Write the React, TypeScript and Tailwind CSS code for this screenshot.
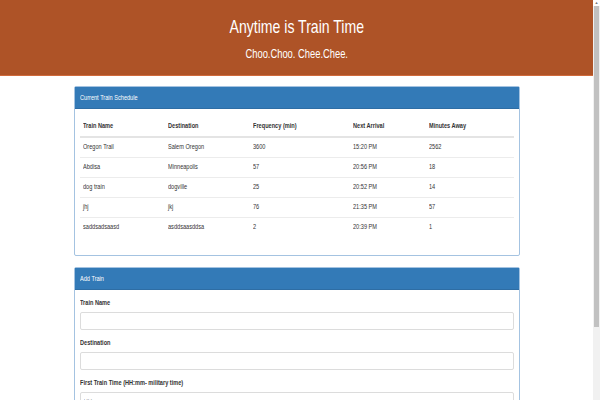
import React from 'react';

const trains = [
    { name: 'Oregon Trail', dest: 'Salem Oregon', freq: '3600', next: '15:20 PM', away: '2562' },
    { name: 'Abdisa', dest: 'Minneapolis', freq: '57', next: '20:56 PM', away: '18' },
    { name: 'dog train', dest: 'dogville', freq: '25', next: '20:52 PM', away: '14' },
    { name: 'jhj', dest: 'jkj', freq: '76', next: '21:35 PM', away: '57' },
    { name: 'saddsadsaasd', dest: 'asddsaasddsa', freq: '2', next: '20:39 PM', away: '1' },
];

// the page text is narrow, squeeze it a bit horizontally
const Sq: React.FC<{ children: React.ReactNode }> = ({ children }) => (
    <span className="inline-block origin-left scale-x-[0.8] whitespace-nowrap">{children}</span>
);

const Panel: React.FC<{ title: string; children: React.ReactNode }> = ({ title, children }) => (
    <div className="border border-[#a4c3e1] rounded-[2px] bg-white">
        <div className="h-[22px] bg-[#337ab7] text-white text-[7px] leading-[22px] px-[5px] border-b border-[#2e6da4]">
            <Sq>{title}</Sq>
        </div>
        {children}
    </div>
);

export default function App() {
    return (
        <div className="flex h-[400px] overflow-hidden bg-white text-[#333] font-['Liberation_Sans',Arial,sans-serif]">
            <div className="flex-1 min-w-0">
                {/* Jumbotron */}
                <header className="h-[76px] bg-[#ae5327] border-b border-[#d06a3b] text-white text-center pt-[15px]">
                    <h1 className="text-[19px] leading-[24px]">
                        <span className="inline-block scale-x-[0.74] whitespace-nowrap">Anytime is Train Time</span>
                    </h1>
                    <p className="text-[12px] leading-[16px] mt-[7px]">
                        <span className="inline-block scale-x-[0.78] whitespace-nowrap">Choo.Choo. Chee.Chee.</span>
                    </p>
                </header>

                <div className="w-[446px] mx-auto mt-[10px] flex flex-col gap-[11px]">
                    <Panel title="Current Train Schedule">
                        <div className="px-[5px] pt-[8px] pb-[18px]">
                            <table className="w-full table-fixed text-[7px]">
                                <colgroup>
                                    <col className="w-[85px]" />
                                    <col className="w-[85px]" />
                                    <col className="w-[100px]" />
                                    <col className="w-[76px]" />
                                    <col />
                                </colgroup>
                                <thead>
                                    <tr className="h-[20px] border-b-2 border-[#e4e4e4]">
                                        {['Train Name', 'Destination', 'Frequency (min)', 'Next Arrival', 'Minutes Away'].map((h) => (
                                            <th key={h} className="text-left font-bold px-[3px]"><Sq>{h}</Sq></th>
                                        ))}
                                    </tr>
                                </thead>
                                <tbody>
                                    {trains.map((t, i) => (
                                        <tr key={t.name} className={`h-[20px] ${i > 0 ? 'border-t border-[#ececec]' : ''}`}>
                                            <td className="px-[3px]"><Sq>{t.name}</Sq></td>
                                            <td className="px-[3px]"><Sq>{t.dest}</Sq></td>
                                            <td className="px-[3px]"><Sq>{t.freq}</Sq></td>
                                            <td className="px-[3px]"><Sq>{t.next}</Sq></td>
                                            <td className="px-[3px]"><Sq>{t.away}</Sq></td>
                                        </tr>
                                    ))}
                                </tbody>
                            </table>
                        </div>
                    </Panel>

                    <Panel title="Add Train">
                        <div className="px-[5px] pt-[9px] flex flex-col gap-[9px]">
                            {[
                                { label: 'Train Name', ph: '' },
                                { label: 'Destination', ph: '' },
                                { label: 'First Train Time (HH:mm- military time)', ph: 'HH:mm' },
                            ].map((f) => (
                                <div key={f.label} className="flex flex-col gap-[5px]">
                                    <label className="text-[7px] leading-[8px] font-bold"><Sq>{f.label}</Sq></label>
                                    <input
                                        placeholder={f.ph}
                                        className="h-[18px] w-full border border-[#dcdcdc] rounded-[2px] px-[3px] text-[6px] placeholder:text-[#999] outline-none"
                                    />
                                </div>
                            ))}
                        </div>
                    </Panel>
                </div>
            </div>

            {/* scrollbar */}
            <div className="w-[7px] bg-[#f1f1f1] flex flex-col items-center">
                <div className="h-[6px] w-full bg-white text-[4px] leading-[6px] text-center text-[#777]">▲</div>
                <div className="w-[5px] h-[321px] bg-[#c1c1c1]" />
            </div>
        </div>
    );
}
